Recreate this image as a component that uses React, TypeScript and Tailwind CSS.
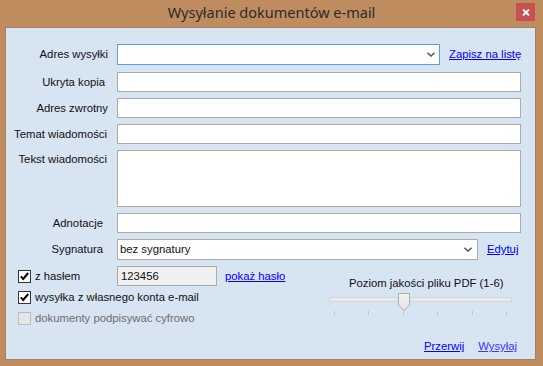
import React from "react";

const font = "font-['Liberation_Sans',Arial,sans-serif]";

function Chevron() {
  return (
    <svg width="8" height="5" viewBox="0 0 8 5" className="block">
      <path d="M0.5 0.8 L4 4 L7.5 0.8" fill="none" stroke="#5f5f5f" strokeWidth="1.6" />
    </svg>
  );
}

function CheckBox({ checked, disabled }: { checked?: boolean; disabled?: boolean }) {
  return (
    <div
      className={
        "w-[13px] h-[13px] border shrink-0 flex items-center justify-center " +
        (disabled ? "bg-[#e6e6e6] border-[#bcbcbc]" : "bg-white border-[#333333]")
      }
    >
      {checked && (
        <svg width="11" height="11" viewBox="0 0 11 11" className="block">
          <path d="M1.8 5.4 L4.2 8 L9.2 2" fill="none" stroke="#000" strokeWidth="2" />
        </svg>
      )}
    </div>
  );
}

function Slider() {
  const ticks = [5, 39, 74, 108, 143, 177];
  return (
    <svg width="184" height="22" viewBox="0 0 184 22" className="block">
      <rect x="0.5" y="4.5" width="182" height="4" fill="#e7eaea" stroke="#d6d6d6" />
      {ticks.map((t) => (
        <rect key={t} x={t} y="18" width="1" height="4" fill="#c4c4c4" />
      ))}
      <defs>
        <linearGradient id="thumb" x1="0" y1="0" x2="0" y2="1">
          <stop offset="0" stopColor="#f2f2f2" />
          <stop offset="1" stopColor="#e5e5e5" />
        </linearGradient>
      </defs>
      <polygon
        points="69.5,0.5 80.5,0.5 80.5,12 75,17.5 69.5,12"
        fill="url(#thumb)"
        stroke="#acacac"
      />
    </svg>
  );
}

function Row({
  label,
  pr = "pr-[9px]",
  children,
}: {
  label: string;
  pr?: string;
  children: React.ReactNode;
}) {
  return (
    <div className="flex items-center">
      <div className={"w-[111px] text-right whitespace-nowrap " + pr}>{label}</div>
      {children}
    </div>
  );
}

const inputCls = "h-[20px] w-[404px] bg-white border border-[#ababab]";

export default function App() {
  return (
    <div className={"w-[543px] h-[366px] bg-[#bf8c60] flex flex-col " + font}>
      <div className="h-[27px] grid grid-cols-[1fr_auto_1fr] items-center">
        <div />
        <div className="font-['Noto_Sans',sans-serif] text-[14.5px] text-[#2b2b2b] leading-none pb-[2px]">
          Wysyłanie dokumentów e-mail
        </div>
        <div className="flex justify-end pr-[8px] self-start pt-[3px]">
          <div className="w-[19px] h-[18px] bg-[#c75050] flex items-center justify-center">
            <svg width="8" height="7" viewBox="0 0 8 7" className="block">
              <path d="M1 0.5 L7 6.5 M7 0.5 L1 6.5" stroke="#fff" strokeWidth="1.8" />
            </svg>
          </div>
        </div>
      </div>

      <div className="ml-[5px] w-[531px] h-[333px] border border-[#a8825e] bg-[#d7e4f2] text-[11.3px] leading-[13px] text-[#111] flex flex-col pt-[16px]">
        <div className="flex flex-col gap-[6px]">
          <Row label="Adres wysyłki">
            <div className="h-[21px] w-[323px] bg-white border border-[#5a9ee6] flex items-center justify-end pr-[4px]">
              <Chevron />
            </div>
            <span className="ml-[9px] text-[#0000ff] underline">Zapisz na listę</span>
          </Row>
          <div className="mt-[1px]">
            <Row label="Ukryta kopia" pr="pr-[12px]">
              <div className={inputCls} />
            </Row>
          </div>
          <Row label="Adres zwrotny">
            <div className={inputCls} />
          </Row>
          <Row label="Temat wiadomości" pr="pr-[10px]">
            <div className={inputCls} />
          </Row>
          <div className="flex items-start">
            <div className="w-[111px] text-right whitespace-nowrap pr-[10px] pt-[3px]">Tekst wiadomości</div>
            <div className="h-[57px] w-[404px] bg-white border border-[#ababab]" />
          </div>
          <Row label="Adnotacje" pr="pr-[14px]">
            <div className={inputCls} />
          </Row>
          <Row label="Sygnatura" pr="pr-[14px]">
            <div className="h-[21px] w-[361px] bg-white border border-[#ababab] flex items-center justify-between pl-[2px] pr-[5px]">
              <span>bez sygnatury</span>
              <Chevron />
            </div>
            <span className="ml-[9px] text-[#0000ff] underline">Edytuj</span>
          </Row>
        </div>

        <div className="flex mt-[6px]">
          <div className="flex flex-col pl-[12px]">
            <div className="h-[20px] flex items-center">
              <CheckBox checked />
              <span className="ml-[4px] w-[82px]">z hasłem</span>
              <div className="h-[20px] w-[100px] bg-[#f0f0f0] border border-[#ababab] flex items-center pl-[3px]">
                123456
              </div>
              <span className="ml-[8px] text-[#0000ff] underline">pokaż hasło</span>
            </div>
            <div className="h-[21px] flex items-center mt-[1px]">
              <CheckBox checked />
              <span className="ml-[4px]">wysyłka z własnego konta e-mail</span>
            </div>
            <div className="h-[21px] flex items-center">
              <CheckBox disabled />
              <span className="ml-[4px] text-[#6d6d6d]">dokumenty podpisywać cyfrowo</span>
            </div>
          </div>
          <div className="ml-auto mr-[22px] flex flex-col pt-[11px]">
            <div className="pl-[20px] whitespace-nowrap">Poziom jakości pliku PDF (1-6)</div>
            <div className="mt-[3px]">
              <Slider />
            </div>
          </div>
        </div>

        <div className="mt-auto mb-[6px] flex justify-end gap-[14px] pr-[18px]">
          <span className="text-[#0000ff] underline">Przerwij</span>
          <span className="text-[#3636ff] underline">Wysyłaj</span>
        </div>
      </div>
    </div>
  );
}
